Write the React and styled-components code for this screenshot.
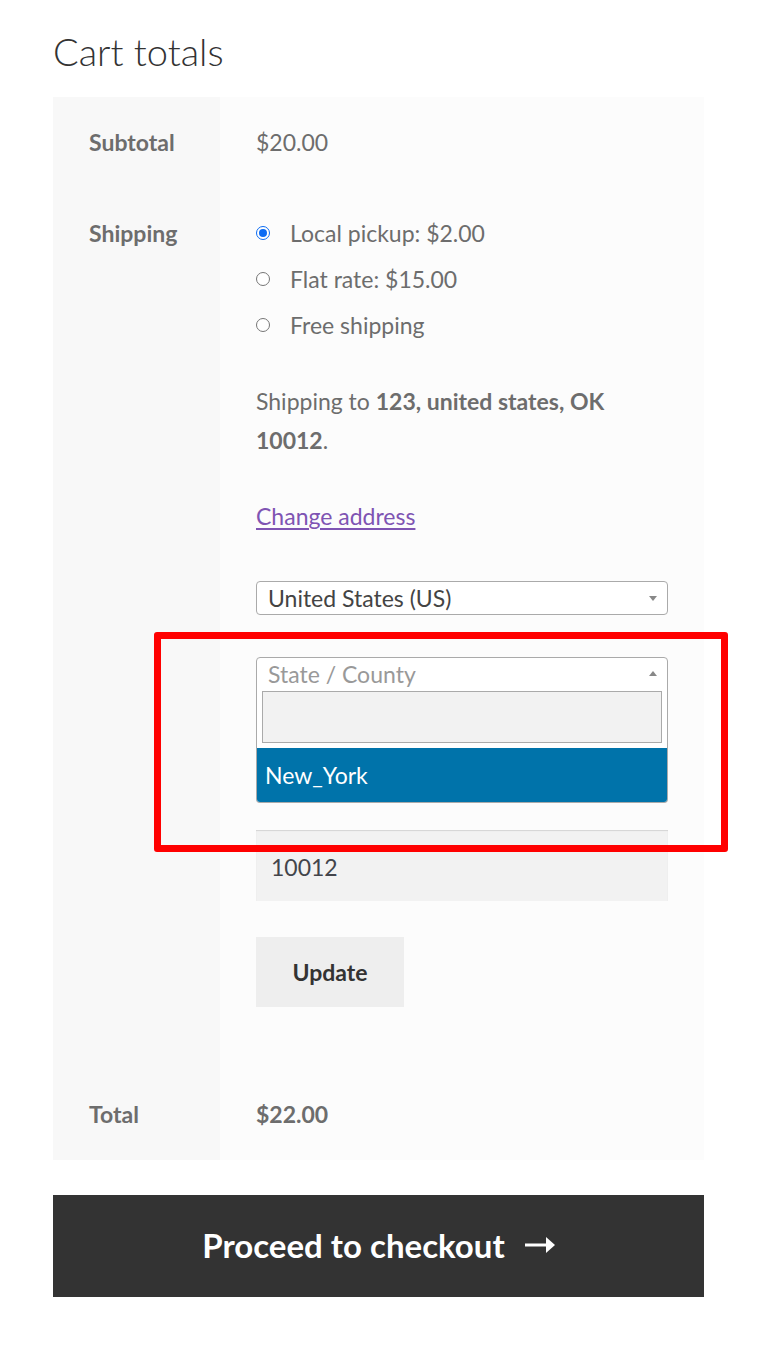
import React from "react";
import styled, { createGlobalStyle } from "styled-components";

const GlobalStyle = createGlobalStyle`
  body {
    margin: 0;
    background: #ffffff;
    font-family: "Source Sans Pro", Lato, "Liberation Sans", sans-serif;
    color: #6d6d6d;
  }
`;

const Page = styled.div`
  position: relative;
  width: 777px;
  height: 1360px;
  overflow: hidden;
  padding: 24px 0 0 53px;
  box-sizing: border-box;
`;

const Title = styled.h2`
  margin: 0 0 18px;
  font-size: 38px;
  line-height: 55px;
  font-weight: 300;
  color: #333333;
`;

const Table = styled.div`
  width: 651px;
  display: grid;
  grid-template-columns: 167px 1fr;
`;

const Label = styled.div`
  background: #f8f8f8;
  padding: ${(p) => (p.$tall ? "32px 0 0 36px" : "32px 0 33px 36px")};
  font-size: 23px;
  line-height: 26px;
  font-weight: 700;
`;

const Value = styled.div`
  background: #fcfcfc;
  padding: ${(p) => (p.$tall ? "32px 36px 62px" : "32px 36px 33px")};
  font-size: 23px;
  line-height: 26px;
  font-weight: ${(p) => (p.$bold ? 700 : 400)};
  position: relative;
`;

const Methods = styled.ul`
  list-style: none;
  margin: 0;
  padding: 0;
  display: flex;
  flex-direction: column;
  gap: 20px;
`;

const Method = styled.li`
  display: flex;
  align-items: center;
  gap: 20px;
`;

const Radio = styled.span`
  width: 14px;
  height: 14px;
  border-radius: 50%;
  box-sizing: border-box;
  border: ${(p) => (p.$on ? "1.5px solid #0b6bf3" : "1px solid #767676")};
  background: #fff;
  display: flex;
  align-items: center;
  justify-content: center;
  flex-shrink: 0;
  &::after {
    content: "";
    display: ${(p) => (p.$on ? "block" : "none")};
    width: 8px;
    height: 8px;
    border-radius: 50%;
    background: #0b6bf3;
  }
`;

const Destination = styled.p`
  margin: 44px 0 0;
  line-height: 39px;
  strong {
    font-weight: 700;
  }
`;

const ChangeLink = styled.a`
  display: block;
  margin-top: 37px;
  line-height: 39px;
  color: #7f54b3;
  text-decoration: underline;
  text-underline-offset: 3px;
  text-decoration-thickness: 2px;
  align-self: flex-start;
`;

const Select = styled.div`
  position: relative;
  margin-top: ${(p) => p.$mt}px;
  height: 34px;
  box-sizing: border-box;
  background: #fff;
  border: 1px solid #aaaaaa;
  border-radius: ${(p) => (p.$open ? "4px 4px 0 0" : "4px")};
  display: flex;
  align-items: center;
  padding: 0 11px;
  color: ${(p) => (p.$placeholder ? "#999999" : "#444444")};
  font-size: 23px;
`;

const Caret = styled.span`
  position: absolute;
  right: 10px;
  top: 14px;
  width: 0;
  height: 0;
  border-left: 4px solid transparent;
  border-right: 4px solid transparent;
  ${(p) =>
    p.$up
      ? "border-bottom: 5px solid #888; top: 13px;"
      : "border-top: 5px solid #888;"}
`;

const Dropdown = styled.div`
  position: absolute;
  left: 0;
  right: 0;
  top: 100%;
  margin: 0 -1px;
  background: #fff;
  border: 1px solid #aaaaaa;
  border-top: none;
  border-radius: 0 0 4px 4px;
  overflow: hidden;
  z-index: 2;
`;

const SearchBox = styled.div`
  padding: 1px 5px 5px;
`;

const SearchField = styled.div`
  height: 52px;
  box-sizing: border-box;
  background: #f2f2f2;
  border: 1px solid #aaaaaa;
`;

const Option = styled.div`
  height: 54px;
  display: flex;
  align-items: center;
  padding: 0 8px;
  background: #0073aa;
  color: #ffffff;
  font-size: 23px;
`;

const Input = styled.div`
  margin-top: 139px;
  height: 71px;
  box-sizing: border-box;
  background: #f2f2f2;
  box-shadow: inset 0 1px 1px rgba(0, 0, 0, 0.125);
  display: flex;
  align-items: center;
  padding: 2px 15px 0;
  color: #43454b;
  font-size: 23px;
`;

const UpdateButton = styled.button`
  margin-top: 36px;
  width: 148px;
  height: 70px;
  border: none;
  background: #eeeeee;
  color: #333333;
  font-family: inherit;
  font-size: 23px;
  font-weight: 700;
  align-self: flex-start;
`;

const Form = styled.div`
  display: flex;
  flex-direction: column;
`;

const Checkout = styled.a`
  margin-top: 35px;
  width: 651px;
  height: 102px;
  background: #333333;
  color: #ffffff;
  display: flex;
  align-items: center;
  justify-content: center;
  gap: 20px;
  font-size: 33px;
  font-weight: 700;
  text-decoration: none;
  padding-bottom: 2px;
  box-sizing: border-box;
`;

const Highlight = styled.div`
  position: absolute;
  left: 154px;
  top: 632px;
  width: 574px;
  height: 220px;
  box-sizing: border-box;
  border: 7px solid #ff0000;
  border-radius: 3px;
  z-index: 5;
`;

const Arrow = () => (
  <svg width="30" height="16" viewBox="0 0 30 16">
    <path d="M0 6.5h21V0l9 8-9 8V9.5H0z" fill="#fff" />
  </svg>
);

export default function App() {
  return (
    <Page>
      <GlobalStyle />
      <Title>Cart totals</Title>
      <Table>
        <Label>Subtotal</Label>
        <Value>$20.00</Value>

        <Label $tall>Shipping</Label>
        <Value $tall>
          <Methods>
            <Method>
              <Radio $on />
              Local pickup: $2.00
            </Method>
            <Method>
              <Radio />
              Flat rate: $15.00
            </Method>
            <Method>
              <Radio />
              Free shipping
            </Method>
          </Methods>
          <Destination>
            Shipping to <strong>123, united states, OK 10012</strong>.
          </Destination>
          <Form>
            <ChangeLink href="#">Change address</ChangeLink>
            <Select $mt={45}>
              United States (US)
              <Caret />
            </Select>
            <Select $mt={42} $open $placeholder>
              State / County
              <Caret $up />
              <Dropdown>
                <SearchBox>
                  <SearchField />
                </SearchBox>
                <Option>New_York</Option>
              </Dropdown>
            </Select>
            <Input>10012</Input>
            <UpdateButton>Update</UpdateButton>
          </Form>
        </Value>

        <Label>Total</Label>
        <Value $bold>$22.00</Value>
      </Table>
      <Checkout href="#">
        Proceed to checkout
        <Arrow />
      </Checkout>
      <Highlight />
    </Page>
  );
}
